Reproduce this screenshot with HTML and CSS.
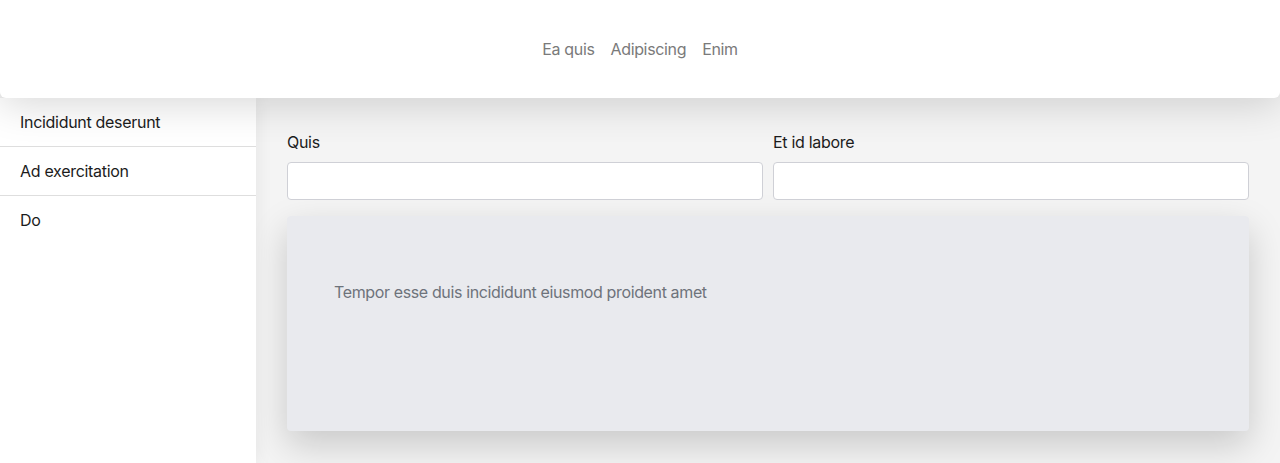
FILE: index.html
```html
<!DOCTYPE html>
<html>
<head>
<meta charset="utf-8">
<link rel="stylesheet" href="styles.css">
</head>
<body>
<header class="topbar">
  <nav class="nav">
    <a class="nav-link">Ea quis</a>
    <a class="nav-link">Adipiscing</a>
    <a class="nav-link">Enim</a>
  </nav>
</header>
<div class="layout">
  <aside class="sidebar">
    <div class="side-item">Incididunt deserunt</div>
    <div class="side-item">Ad exercitation</div>
    <div class="side-item">Do</div>
  </aside>
  <main class="main">
    <div class="fields">
      <label class="field">
        <span class="field-label">Quis</span>
        <input class="field-input" type="text">
      </label>
      <label class="field">
        <span class="field-label">Et id labore</span>
        <input class="field-input" type="text">
      </label>
    </div>
    <div class="card">
      <p class="card-text">Tempor esse duis incididunt eiusmod proident amet</p>
    </div>
  </main>
</div>
</body>
</html>
```
FILE: styles.css
```css
* { box-sizing: border-box; }
html, body { margin: 0; padding: 0; height: 100%; }
body {
  font-family: Inter, "Liberation Sans", sans-serif;
  font-size: 16px;
  color: #222;
  background: #f4f4f4;
  overflow: hidden;
}
.topbar {
  position: relative;
  z-index: 2;
  height: 98px;
  background: #fff;
  display: flex;
  align-items: center;
  justify-content: center;
  box-shadow: 0 6px 40px rgba(0,0,0,0.16);
  border-radius: 0 0 6px 6px;
}
.nav { display: flex; gap: 16px; }
.nav-link { color: #7a7a7a; font-size: 16px; letter-spacing: -0.35px; }
.layout { display: flex; height: 365px; }
.sidebar {
  width: 256px;
  background: #fff;
  position: relative;
  z-index: 1;
  box-shadow: 2px 0 16px rgba(0,0,0,0.06);
}
.side-item {
  height: 49px;
  padding: 14px 20px 0;
  border-bottom: 1px solid #dedede;
  color: #1c1c1c;
  letter-spacing: -0.3px;
}
.side-item:last-child { border-bottom: none; }
.main {
  flex: 1;
  padding: 34px 31px 0;
}
.fields { display: flex; gap: 10px; }
.field { flex: 1; display: flex; flex-direction: column; }
.field-label { color: #1c1c1c; height: 30px; letter-spacing: -0.3px; }
.field-input {
  height: 38px;
  border: 1px solid #cfd0d6;
  border-radius: 4px;
  background: #fff;
  outline: none;
}
.card {
  margin-top: 16px;
  height: 215px;
  background: #e9eaee;
  border-radius: 4px;
  padding: 66px 47px 0;
  box-shadow: 0 14px 36px rgba(0,0,0,0.18);
}
.card-text { margin: 0; color: #6e737b; letter-spacing: -0.37px; }
```
